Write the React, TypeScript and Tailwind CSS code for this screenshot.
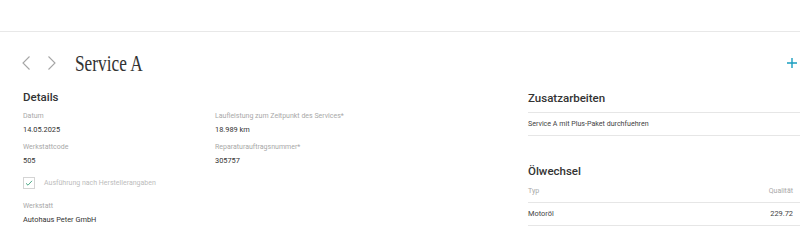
import React from "react";

const Field = ({ label, value }: { label: string; value: string }) => (
  <div className="flex flex-col mb-[3px]">
    <span className="h-[14px] leading-[14px] text-[7px] text-[#a8a8a8]">{label}</span>
    <span className="h-[14px] leading-[14px] text-[7.4px] text-[#333]">{value}</span>
  </div>
);

const App = () => {
  return (
    <div className="w-[800px] h-[241px] overflow-hidden bg-white font-['Roboto',sans-serif]">
      <div className="h-[32px] border-b border-[#e8e8e8]" />

      {/* title row */}
      <div className="flex items-center h-[58px] pt-[4px] pl-[21px] pr-[3px]">
        <button className="w-[12px] h-[16px] text-[#a5a5a5]">
          <svg width="10" height="16" viewBox="0 0 10 16" fill="none" stroke="currentColor" strokeWidth="1.1">
            <path d="M8.5 1.5 L2 8 L8.5 14.5" />
          </svg>
        </button>
        <button className="w-[12px] h-[16px] ml-[14px] text-[#a5a5a5]">
          <svg width="10" height="16" viewBox="0 0 10 16" fill="none" stroke="currentColor" strokeWidth="1.1">
            <path d="M1.5 1.5 L8 8 L1.5 14.5" />
          </svg>
        </button>
        <h1 className="ml-[16px] font-['Liberation_Serif',serif] text-[24px] leading-none text-[#333] scale-x-[0.72] origin-left whitespace-nowrap">
          Service A
        </h1>
        <span className="ml-auto text-[#1a9ec0]">
          <svg width="10" height="10" viewBox="0 0 10 10" stroke="currentColor" strokeWidth="1.4">
            <path d="M5 0 V10 M0 5 H10" />
          </svg>
        </span>
      </div>

      <div className="flex">
        {/* left */}
        <div className="w-[528px] pl-[23px]">
          <h2 className="h-[14px] leading-[14px] text-[11.5px] font-medium text-[#333]">Details</h2>
          <div className="grid grid-cols-[192px_1fr] mt-[5px]">
            <div>
              <Field label="Datum" value="14.05.2025" />
              <Field label="Werkstattcode" value="505" />
            </div>
            <div>
              <Field label="Laufleistung zum Zeitpunkt des Services*" value="18.989 km" />
              <Field label="Reparaturauftragsnummer*" value="305757" />
            </div>
          </div>
          <div className="flex items-center h-[24px]">
            <span className="w-[12px] h-[12px] border border-[#d4d4d4] flex items-center justify-center text-[#3aa07a]">
              <svg width="8" height="8" viewBox="0 0 8 8" fill="none" stroke="currentColor" strokeWidth="0.9">
                <path d="M1 4.3 L3 6.2 L7 1.8" />
              </svg>
            </span>
            <span className="ml-[9px] text-[7px] text-[#bcbcbc]">Ausführung nach Herstellerangaben</span>
          </div>
          <div className="mt-[4px]">
            <Field label="Werkstatt" value="Autohaus Peter GmbH" />
          </div>
        </div>

        {/* right */}
        <div className="flex-1">
          <h2 className="h-[16px] leading-[16px] text-[11.5px] font-medium text-[#333]">Zusatzarbeiten</h2>
          <div className="mt-[6px] border-t border-b border-[#e6e6e6] h-[24px] flex items-center text-[7.1px] text-[#444]">
            Service A mit Plus-Paket durchfuehren
          </div>
          <h2 className="mt-[25px] h-[20px] leading-[20px] text-[11.5px] font-medium text-[#333]">Ölwechsel</h2>
          <div className="flex justify-between h-[21px] items-center pb-[1px] text-[7px] text-[#a8a8a8] pr-[7px]">
            <span>Typ</span>
            <span>Qualität</span>
          </div>
          <div className="border-t border-b border-[#e6e6e6] h-[24px] flex justify-between items-center text-[7.4px] text-[#444] pr-[7px]">
            <span>Motoröl</span>
            <span>229.72</span>
          </div>
        </div>
      </div>
    </div>
  );
};

export default App;
